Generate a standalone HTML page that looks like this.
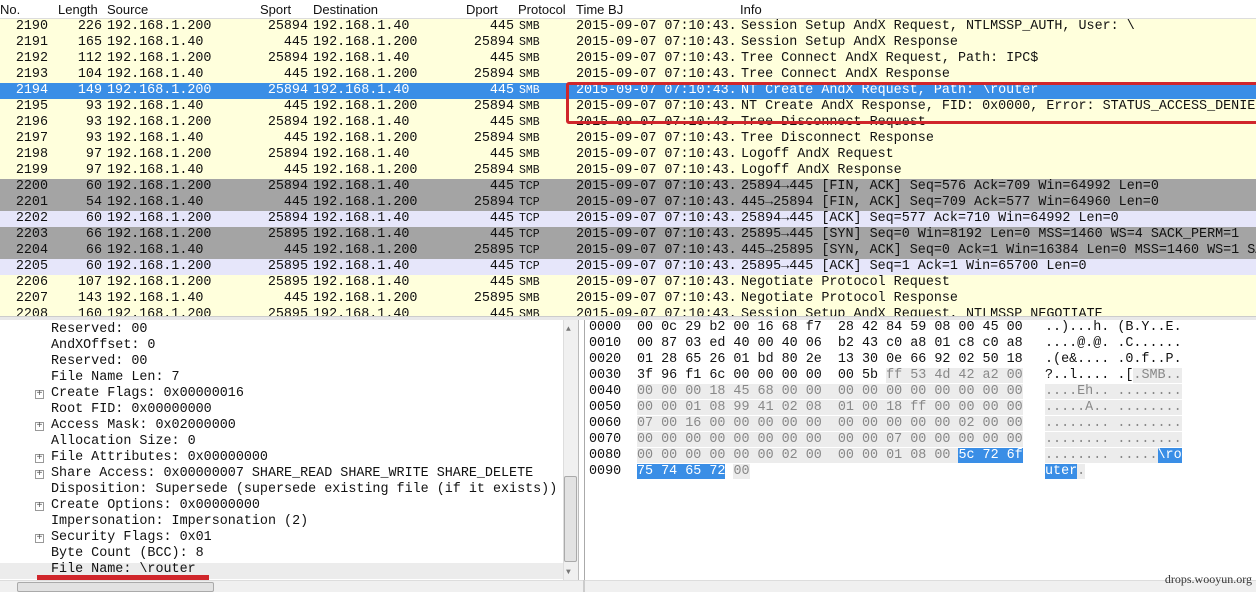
<!DOCTYPE html>
<html><head><meta charset="utf-8"><style>
*{margin:0;padding:0;box-sizing:border-box}
body{width:1256px;height:592px;overflow:hidden;background:#fff;position:relative;font-family:"Liberation Mono",monospace;font-size:13.4px;color:#111}
.hd{position:absolute;left:0;top:0;width:1256px;height:19px;background:#fff;border-bottom:1px solid #ddd;font-family:"Liberation Sans",sans-serif;font-size:13px}
.hd span{position:absolute;top:2px}
.r{position:absolute;left:0;width:1256px;height:16px;line-height:16px;white-space:pre}
.r span{position:absolute;top:0}
.y{background:#ffffdc}.g{background:#a4a4a4}.b{background:#e6e6fa}.s{background:#3a8ee6;color:#fff}
.ra{text-align:right}
.p{font-size:11.5px}
.l{position:absolute;white-space:pre;line-height:16px}
.pl{position:absolute;font-size:10px;border:1px solid #999;width:9px;height:9px;line-height:7px;text-align:center;color:#555}
.gr{background:#ececec;color:#888}
.hl{background:#3a8ee6;color:#fff}
</style></head><body>
<div class="hd"><span style="left:0">No.</span><span style="left:58px">Length</span><span style="left:107px">Source</span><span style="left:260px">Sport</span><span style="left:313px">Destination</span><span style="left:466px">Dport</span><span style="left:518px">Protocol</span><span style="left:576px">Time BJ</span><span style="left:740px">Info</span></div>

<div class="r y" style="top:19px"><span class="ra" style="right:1208px">2190</span><span class="ra" style="right:1154px">226</span><span style="left:107px">192.168.1.200</span><span class="ra" style="right:948px">25894</span><span style="left:313px">192.168.1.40</span><span class="ra" style="right:742px">445</span><span class="p" style="left:519px">SMB</span><span style="left:576px">2015-09-07 07:10:43.</span><span style="left:741px">Session Setup AndX Request, NTLMSSP_AUTH, User: \</span></div>
<div class="r y" style="top:35px"><span class="ra" style="right:1208px">2191</span><span class="ra" style="right:1154px">165</span><span style="left:107px">192.168.1.40</span><span class="ra" style="right:948px">445</span><span style="left:313px">192.168.1.200</span><span class="ra" style="right:742px">25894</span><span class="p" style="left:519px">SMB</span><span style="left:576px">2015-09-07 07:10:43.</span><span style="left:741px">Session Setup AndX Response</span></div>
<div class="r y" style="top:51px"><span class="ra" style="right:1208px">2192</span><span class="ra" style="right:1154px">112</span><span style="left:107px">192.168.1.200</span><span class="ra" style="right:948px">25894</span><span style="left:313px">192.168.1.40</span><span class="ra" style="right:742px">445</span><span class="p" style="left:519px">SMB</span><span style="left:576px">2015-09-07 07:10:43.</span><span style="left:741px">Tree Connect AndX Request, Path: IPC$</span></div>
<div class="r y" style="top:67px"><span class="ra" style="right:1208px">2193</span><span class="ra" style="right:1154px">104</span><span style="left:107px">192.168.1.40</span><span class="ra" style="right:948px">445</span><span style="left:313px">192.168.1.200</span><span class="ra" style="right:742px">25894</span><span class="p" style="left:519px">SMB</span><span style="left:576px">2015-09-07 07:10:43.</span><span style="left:741px">Tree Connect AndX Response</span></div>
<div class="r s" style="top:83px"><span class="ra" style="right:1208px">2194</span><span class="ra" style="right:1154px">149</span><span style="left:107px">192.168.1.200</span><span class="ra" style="right:948px">25894</span><span style="left:313px">192.168.1.40</span><span class="ra" style="right:742px">445</span><span class="p" style="left:519px">SMB</span><span style="left:576px">2015-09-07 07:10:43.</span><span style="left:741px">NT Create AndX Request, Path: \router</span></div>
<div class="r y" style="top:99px"><span class="ra" style="right:1208px">2195</span><span class="ra" style="right:1154px">93</span><span style="left:107px">192.168.1.40</span><span class="ra" style="right:948px">445</span><span style="left:313px">192.168.1.200</span><span class="ra" style="right:742px">25894</span><span class="p" style="left:519px">SMB</span><span style="left:576px">2015-09-07 07:10:43.</span><span style="left:741px">NT Create AndX Response, FID: 0x0000, Error: STATUS_ACCESS_DENIED</span></div>
<div class="r y" style="top:115px"><span class="ra" style="right:1208px">2196</span><span class="ra" style="right:1154px">93</span><span style="left:107px">192.168.1.200</span><span class="ra" style="right:948px">25894</span><span style="left:313px">192.168.1.40</span><span class="ra" style="right:742px">445</span><span class="p" style="left:519px">SMB</span><span style="left:576px">2015-09-07 07:10:43.</span><span style="left:741px">Tree Disconnect Request</span></div>
<div class="r y" style="top:131px"><span class="ra" style="right:1208px">2197</span><span class="ra" style="right:1154px">93</span><span style="left:107px">192.168.1.40</span><span class="ra" style="right:948px">445</span><span style="left:313px">192.168.1.200</span><span class="ra" style="right:742px">25894</span><span class="p" style="left:519px">SMB</span><span style="left:576px">2015-09-07 07:10:43.</span><span style="left:741px">Tree Disconnect Response</span></div>
<div class="r y" style="top:147px"><span class="ra" style="right:1208px">2198</span><span class="ra" style="right:1154px">97</span><span style="left:107px">192.168.1.200</span><span class="ra" style="right:948px">25894</span><span style="left:313px">192.168.1.40</span><span class="ra" style="right:742px">445</span><span class="p" style="left:519px">SMB</span><span style="left:576px">2015-09-07 07:10:43.</span><span style="left:741px">Logoff AndX Request</span></div>
<div class="r y" style="top:163px"><span class="ra" style="right:1208px">2199</span><span class="ra" style="right:1154px">97</span><span style="left:107px">192.168.1.40</span><span class="ra" style="right:948px">445</span><span style="left:313px">192.168.1.200</span><span class="ra" style="right:742px">25894</span><span class="p" style="left:519px">SMB</span><span style="left:576px">2015-09-07 07:10:43.</span><span style="left:741px">Logoff AndX Response</span></div>
<div class="r g" style="top:179px"><span class="ra" style="right:1208px">2200</span><span class="ra" style="right:1154px">60</span><span style="left:107px">192.168.1.200</span><span class="ra" style="right:948px">25894</span><span style="left:313px">192.168.1.40</span><span class="ra" style="right:742px">445</span><span class="p" style="left:519px">TCP</span><span style="left:576px">2015-09-07 07:10:43.</span><span style="left:741px">25894→445 [FIN, ACK] Seq=576 Ack=709 Win=64992 Len=0</span></div>
<div class="r g" style="top:195px"><span class="ra" style="right:1208px">2201</span><span class="ra" style="right:1154px">54</span><span style="left:107px">192.168.1.40</span><span class="ra" style="right:948px">445</span><span style="left:313px">192.168.1.200</span><span class="ra" style="right:742px">25894</span><span class="p" style="left:519px">TCP</span><span style="left:576px">2015-09-07 07:10:43.</span><span style="left:741px">445→25894 [FIN, ACK] Seq=709 Ack=577 Win=64960 Len=0</span></div>
<div class="r b" style="top:211px"><span class="ra" style="right:1208px">2202</span><span class="ra" style="right:1154px">60</span><span style="left:107px">192.168.1.200</span><span class="ra" style="right:948px">25894</span><span style="left:313px">192.168.1.40</span><span class="ra" style="right:742px">445</span><span class="p" style="left:519px">TCP</span><span style="left:576px">2015-09-07 07:10:43.</span><span style="left:741px">25894→445 [ACK] Seq=577 Ack=710 Win=64992 Len=0</span></div>
<div class="r g" style="top:227px"><span class="ra" style="right:1208px">2203</span><span class="ra" style="right:1154px">66</span><span style="left:107px">192.168.1.200</span><span class="ra" style="right:948px">25895</span><span style="left:313px">192.168.1.40</span><span class="ra" style="right:742px">445</span><span class="p" style="left:519px">TCP</span><span style="left:576px">2015-09-07 07:10:43.</span><span style="left:741px">25895→445 [SYN] Seq=0 Win=8192 Len=0 MSS=1460 WS=4 SACK_PERM=1</span></div>
<div class="r g" style="top:243px"><span class="ra" style="right:1208px">2204</span><span class="ra" style="right:1154px">66</span><span style="left:107px">192.168.1.40</span><span class="ra" style="right:948px">445</span><span style="left:313px">192.168.1.200</span><span class="ra" style="right:742px">25895</span><span class="p" style="left:519px">TCP</span><span style="left:576px">2015-09-07 07:10:43.</span><span style="left:741px">445→25895 [SYN, ACK] Seq=0 Ack=1 Win=16384 Len=0 MSS=1460 WS=1 SA</span></div>
<div class="r b" style="top:259px"><span class="ra" style="right:1208px">2205</span><span class="ra" style="right:1154px">60</span><span style="left:107px">192.168.1.200</span><span class="ra" style="right:948px">25895</span><span style="left:313px">192.168.1.40</span><span class="ra" style="right:742px">445</span><span class="p" style="left:519px">TCP</span><span style="left:576px">2015-09-07 07:10:43.</span><span style="left:741px">25895→445 [ACK] Seq=1 Ack=1 Win=65700 Len=0</span></div>
<div class="r y" style="top:275px"><span class="ra" style="right:1208px">2206</span><span class="ra" style="right:1154px">107</span><span style="left:107px">192.168.1.200</span><span class="ra" style="right:948px">25895</span><span style="left:313px">192.168.1.40</span><span class="ra" style="right:742px">445</span><span class="p" style="left:519px">SMB</span><span style="left:576px">2015-09-07 07:10:43.</span><span style="left:741px">Negotiate Protocol Request</span></div>
<div class="r y" style="top:291px"><span class="ra" style="right:1208px">2207</span><span class="ra" style="right:1154px">143</span><span style="left:107px">192.168.1.40</span><span class="ra" style="right:948px">445</span><span style="left:313px">192.168.1.200</span><span class="ra" style="right:742px">25895</span><span class="p" style="left:519px">SMB</span><span style="left:576px">2015-09-07 07:10:43.</span><span style="left:741px">Negotiate Protocol Response</span></div>
<div class="r y" style="top:307px;height:9px;overflow:hidden"><span class="ra" style="right:1208px">2208</span><span class="ra" style="right:1154px">160</span><span style="left:107px">192.168.1.200</span><span class="ra" style="right:948px">25895</span><span style="left:313px">192.168.1.40</span><span class="ra" style="right:742px">445</span><span class="p" style="left:519px">SMB</span><span style="left:576px">2015-09-07 07:10:43.</span><span style="left:741px">Session Setup AndX Request, NTLMSSP_NEGOTIATE</span></div>
<div style="position:absolute;left:0;top:316px;width:1256px;height:4px;background:#e8e8e8;border-top:1px solid #ccc"></div>
<div style="position:absolute;left:566px;top:82px;width:700px;height:42px;border:3px solid #d0262b;border-radius:3px"></div>

<div style="position:absolute;left:0;top:320px;width:579px;height:260px;border-right:1px solid #bbb"></div>
<div style="position:absolute;left:0;top:563px;width:563px;height:16px;background:#ececec"></div>
<div class="l" style="left:51px;top:322px">Reserved: 00
AndXOffset: 0
Reserved: 00
File Name Len: 7
Create Flags: 0x00000016
Root FID: 0x00000000
Access Mask: 0x02000000
Allocation Size: 0
File Attributes: 0x00000000
Share Access: 0x00000007 SHARE_READ SHARE_WRITE SHARE_DELETE
Disposition: Supersede (supersede existing file (if it exists))
Create Options: 0x00000000
Impersonation: Impersonation (2)
Security Flags: 0x01
Byte Count (BCC): 8
File Name: \router</div>
<div class="pl" style="left:35px;top:390px">+</div>
<div class="pl" style="left:35px;top:422px">+</div>
<div class="pl" style="left:35px;top:454px">+</div>
<div class="pl" style="left:35px;top:470px">+</div>
<div class="pl" style="left:35px;top:502px">+</div>
<div class="pl" style="left:35px;top:534px">+</div>
<div style="position:absolute;left:37px;top:575px;width:172px;height:5px;background:#d0262b"></div>
<div style="position:absolute;left:563px;top:320px;width:15px;height:260px;background:#f0f0f0;border-left:1px solid #ddd"></div>
<div style="position:absolute;left:564px;top:476px;width:13px;height:86px;background:#e2e2e2;border:1px solid #aaa;border-radius:2px"></div>
<div style="position:absolute;left:566px;top:325px;font-size:8px;color:#777">▲</div>
<div style="position:absolute;left:566px;top:568px;font-size:8px;color:#777">▼</div>
<div style="position:absolute;left:0;top:580px;width:1256px;height:12px;background:#f0f0f0;border-top:1px solid #ddd"></div>
<div style="position:absolute;left:17px;top:582px;width:197px;height:10px;background:#e2e2e2;border:1px solid #aaa;border-radius:2px"></div>
<div style="position:absolute;left:583px;top:580px;width:2px;height:12px;background:#ccc"></div>

<div style="position:absolute;left:584px;top:320px;width:672px;height:260px;border-left:1px solid #aaa"></div>
<div class="l" style="left:589px;top:320px">0000
0010
0020
0030
0040
0050
0060
0070
0080
0090</div>
<div class="l" style="left:637px;top:320px">00 0c 29 b2 00 16 68 f7  28 42 84 59 08 00 45 00
00 87 03 ed 40 00 40 06  b2 43 c0 a8 01 c8 c0 a8
01 28 65 26 01 bd 80 2e  13 30 0e 66 92 02 50 18
3f 96 f1 6c 00 00 00 00  00 5b <span class="gr">ff 53 4d 42 a2 00</span>
<span class="gr">00 00 00 18 45 68 00 00  00 00 00 00 00 00 00 00</span>
<span class="gr">00 00 01 08 99 41 02 08  01 00 18 ff 00 00 00 00</span>
<span class="gr">07 00 16 00 00 00 00 00  00 00 00 00 00 02 00 00</span>
<span class="gr">00 00 00 00 00 00 00 00  00 00 07 00 00 00 00 00</span>
<span class="gr">00 00 00 00 00 00 02 00  00 00 01 08 00 </span><span class="hl">5c 72 6f</span>
<span class="hl">75 74 65 72</span> <span class="gr">00</span></div>
<div class="l" style="left:1045px;top:320px">..)...h. (B.Y..E.
....@.@. .C......
.(e&amp;.... .0.f..P.
?..l.... .[<span class="gr">.SMB..</span>
<span class="gr">....Eh.. ........</span>
<span class="gr">.....A.. ........</span>
<span class="gr">........ ........</span>
<span class="gr">........ ........</span>
<span class="gr">........ .....</span><span class="hl">\ro</span>
<span class="hl">uter</span><span class="gr">.</span></div>
<div style="position:absolute;right:4px;top:572px;font-family:'Liberation Serif',serif;font-size:12px;color:#333">drops.wooyun.org</div>
</body></html>
